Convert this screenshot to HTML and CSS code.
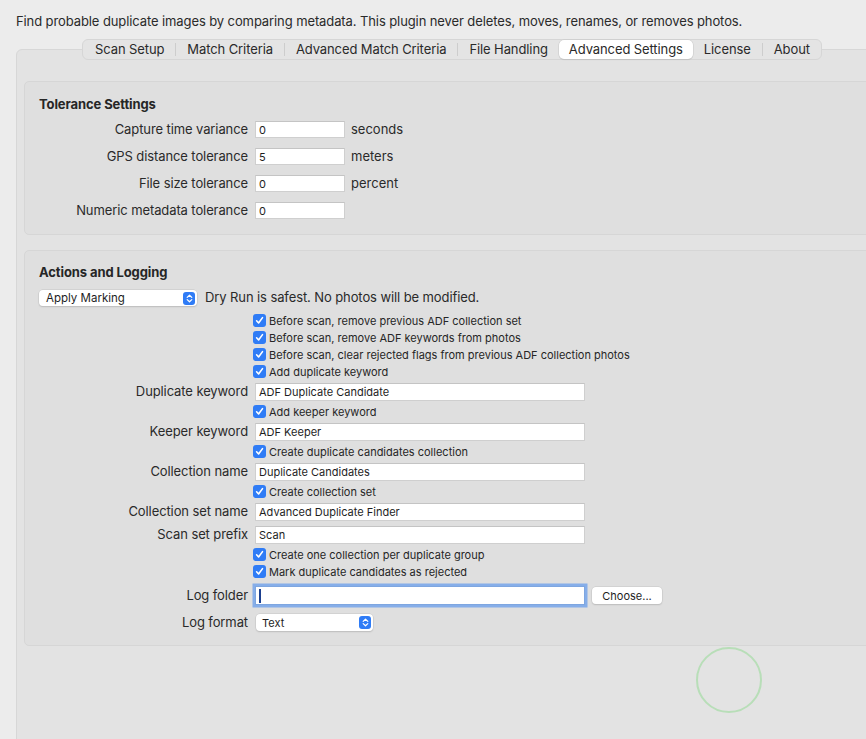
FILE: index.html
```html
<!DOCTYPE html>
<html>
<head>
<meta charset="utf-8">
<link rel="stylesheet" href="styles.css">
</head>
<body>
<p class="intro">Find probable duplicate images by comparing metadata. This plugin never deletes, moves, renames, or removes photos.</p>
<nav class="tabbar">
  <span class="tab">Scan Setup</span><span class="sep"></span>
  <span class="tab">Match Criteria</span><span class="sep"></span>
  <span class="tab">Advanced Match Criteria</span><span class="sep"></span>
  <span class="tab">File Handling</span>
  <span class="tab active">Advanced Settings</span>
  <span class="tab">License</span><span class="sep"></span>
  <span class="tab">About</span>
</nav>
<section class="panel">
  <div class="group g1">
    <h2 class="group-title">Tolerance Settings</h2>
    <div class="trow"><span class="lbl">Capture time variance</span><div class="ctl"><span class="field short">0</span><span class="unit">seconds</span></div></div>
    <div class="trow"><span class="lbl">GPS distance tolerance</span><div class="ctl"><span class="field short">5</span><span class="unit">meters</span></div></div>
    <div class="trow"><span class="lbl">File size tolerance</span><div class="ctl"><span class="field short">0</span><span class="unit">percent</span></div></div>
    <div class="trow"><span class="lbl">Numeric metadata tolerance</span><div class="ctl"><span class="field short">0</span></div></div>
  </div>
  <div class="group g2">
    <h2 class="group-title">Actions and Logging</h2>
    <div class="moderow">
      <span class="popup mode">Apply Marking<span class="stepper"><svg width="7" height="9" viewBox="0 0 7 9"><path d="M1.2 3.4 L3.5 1.2 L5.8 3.4 M1.2 5.6 L3.5 7.8 L5.8 5.6" fill="none" stroke="#fff" stroke-width="1.2" stroke-linecap="round" stroke-linejoin="round"/></svg></span></span>
      <span class="note">Dry Run is safest. No photos will be modified.</span>
    </div>
    <div class="crow"><span class="lbl"></span><label class="check"><span class="box"><svg width="9" height="9" viewBox="0 0 9 9"><path d="M1.6 4.8 L3.6 7 L7.5 1.6" fill="none" stroke="#fff" stroke-width="1.6" stroke-linecap="round" stroke-linejoin="round"/></svg></span>Before scan, remove previous ADF collection set</label></div>
    <div class="crow"><span class="lbl"></span><label class="check"><span class="box"><svg width="9" height="9" viewBox="0 0 9 9"><path d="M1.6 4.8 L3.6 7 L7.5 1.6" fill="none" stroke="#fff" stroke-width="1.6" stroke-linecap="round" stroke-linejoin="round"/></svg></span>Before scan, remove ADF keywords from photos</label></div>
    <div class="crow"><span class="lbl"></span><label class="check"><span class="box"><svg width="9" height="9" viewBox="0 0 9 9"><path d="M1.6 4.8 L3.6 7 L7.5 1.6" fill="none" stroke="#fff" stroke-width="1.6" stroke-linecap="round" stroke-linejoin="round"/></svg></span>Before scan, clear rejected flags from previous ADF collection photos</label></div>
    <div class="crow"><span class="lbl"></span><label class="check"><span class="box"><svg width="9" height="9" viewBox="0 0 9 9"><path d="M1.6 4.8 L3.6 7 L7.5 1.6" fill="none" stroke="#fff" stroke-width="1.6" stroke-linecap="round" stroke-linejoin="round"/></svg></span>Add duplicate keyword</label></div>
    <div class="frow"><span class="lbl">Duplicate keyword</span><span class="field long">ADF Duplicate Candidate</span></div>
    <div class="crow"><span class="lbl"></span><label class="check"><span class="box"><svg width="9" height="9" viewBox="0 0 9 9"><path d="M1.6 4.8 L3.6 7 L7.5 1.6" fill="none" stroke="#fff" stroke-width="1.6" stroke-linecap="round" stroke-linejoin="round"/></svg></span>Add keeper keyword</label></div>
    <div class="frow"><span class="lbl">Keeper keyword</span><span class="field long">ADF Keeper</span></div>
    <div class="crow"><span class="lbl"></span><label class="check"><span class="box"><svg width="9" height="9" viewBox="0 0 9 9"><path d="M1.6 4.8 L3.6 7 L7.5 1.6" fill="none" stroke="#fff" stroke-width="1.6" stroke-linecap="round" stroke-linejoin="round"/></svg></span>Create duplicate candidates collection</label></div>
    <div class="frow"><span class="lbl">Collection name</span><span class="field long">Duplicate Candidates</span></div>
    <div class="crow"><span class="lbl"></span><label class="check"><span class="box"><svg width="9" height="9" viewBox="0 0 9 9"><path d="M1.6 4.8 L3.6 7 L7.5 1.6" fill="none" stroke="#fff" stroke-width="1.6" stroke-linecap="round" stroke-linejoin="round"/></svg></span>Create collection set</label></div>
    <div class="frow"><span class="lbl">Collection set name</span><span class="field long">Advanced Duplicate Finder</span></div>
    <div class="frow"><span class="lbl">Scan set prefix</span><span class="field long">Scan</span></div>
    <div class="crow"><span class="lbl"></span><label class="check"><span class="box"><svg width="9" height="9" viewBox="0 0 9 9"><path d="M1.6 4.8 L3.6 7 L7.5 1.6" fill="none" stroke="#fff" stroke-width="1.6" stroke-linecap="round" stroke-linejoin="round"/></svg></span>Create one collection per duplicate group</label></div>
    <div class="crow"><span class="lbl"></span><label class="check"><span class="box"><svg width="9" height="9" viewBox="0 0 9 9"><path d="M1.6 4.8 L3.6 7 L7.5 1.6" fill="none" stroke="#fff" stroke-width="1.6" stroke-linecap="round" stroke-linejoin="round"/></svg></span>Mark duplicate candidates as rejected</label></div>
    <div class="frow logrow"><span class="lbl">Log folder</span><span class="field long focus"><span class="caret"></span></span><span class="button">Choose...</span></div>
    <div class="frow fmtrow"><span class="lbl">Log format</span><span class="popup fmt">Text<span class="stepper"><svg width="7" height="9" viewBox="0 0 7 9"><path d="M1.2 3.4 L3.5 1.2 L5.8 3.4 M1.2 5.6 L3.5 7.8 L5.8 5.6" fill="none" stroke="#fff" stroke-width="1.2" stroke-linecap="round" stroke-linejoin="round"/></svg></span></span></div>
  </div>
</section>
<div class="spinner"></div>
</body>
</html>
```

FILE: styles.css
```css
html, body {
  margin: 0;
  padding: 0;
}
body {
  background: #ececec;
  font-family: Inter, "Noto Sans", sans-serif;
  color: #262626;
  overflow: hidden;
  height: 739px;
  position: relative;
}
.intro {
  margin: 0;
  padding: 13px 0 0 16px;
  font-size: 13px;
  line-height: 16px;
  color: #2a2a2a;
  letter-spacing: -0.1px;
}
.tabbar {
  position: relative;
  z-index: 2;
  display: inline-flex;
  align-items: center;
  margin: 10px 0 0 82px;
  height: 19px;
  padding: 0;
  border: 1px solid #d6d6d6;
  border-radius: 6px;
  background: #e4e4e4;
}
.tab {
  font-size: 13px;
  line-height: 19px;
  padding: 0 11px;
  color: #2a2a2a;
  letter-spacing: -0.1px;
}
.tab:first-child {
  padding-left: 12px;
}
.tab.active {
  background: #fff;
  border-radius: 5px;
  box-shadow: 0 0 0 0.5px #c9c9c9, 0 1px 1px rgba(0,0,0,0.12);
  padding: 0 10px;
  height: 19px;
}
.sep {
  width: 1px;
  height: 13px;
  background: #cdcdcd;
}
.panel {
  margin: -11px 0 0 16px;
  width: 900px;
  height: 700px;
  box-sizing: border-box;
  background: #e3e3e3;
  border: 1px solid #d7d7d7;
  border-radius: 6px 0 0 0;
  padding: 31px 0 0 7px;
}
.group {
  background: #dfdfdf;
  border: 1px solid #d6d6d6;
  border-radius: 5px;
  box-sizing: border-box;
}
.g1 {
  height: 154px;
  padding: 14px 0 0 14px;
}
.g2 {
  margin-top: 15px;
  height: 396px;
  padding: 13px 0 0 14px;
}
.group-title {
  margin: 0;
  font-size: 13px;
  line-height: 16px;
  font-weight: 700;
  color: #262626;
  letter-spacing: -0.1px;
}
.g1 .group-title { margin-bottom: 4px; }
.g2 .group-title { margin-bottom: 10px; }
.lbl {
  width: 209px;
  flex: none;
  text-align: right;
  font-size: 13px;
  color: #2a2a2a;
  letter-spacing: -0.1px;
  padding-right: 7px;
  box-sizing: content-box;
  margin-top: -2px;
}
.trow {
  display: flex;
  align-items: center;
  height: 27px;
}
.ctl {
  display: flex;
  align-items: center;
}
.field {
  display: flex;
  align-items: center;
  background: #fff;
  border: 1px solid #cfcfcf;
  border-top-color: #c4c4c4;
  box-sizing: border-box;
  font-size: 11px;
  padding: 0 3px;
  color: #1e1e1e;
  position: relative;
}
.field.short {
  width: 90px;
  height: 17px;
}
.field.long {
  width: 330px;
  height: 18px;
}
.unit {
  margin-left: 6px;
  font-size: 13px;
  color: #2a2a2a;
  margin-top: -2px;
}
.moderow {
  display: flex;
  align-items: center;
  height: 16px;
  margin-bottom: 6px;
}
.popup {
  display: flex;
  align-items: center;
  justify-content: space-between;
  box-sizing: border-box;
  background: #fff;
  border-radius: 4px;
  box-shadow: 0 0 0 0.5px #c5c5c5, 0 1px 1.5px rgba(0,0,0,0.18);
  font-size: 11px;
  color: #1e1e1e;
}
.popup.mode {
  width: 158px;
  height: 16px;
  padding: 0 2px 0 7px;
  font-size: 11.5px;
}
.popup.fmt {
  width: 117px;
  height: 17px;
  padding: 0 2px 0 6px;
  margin-left: 1px;
}
.stepper {
  width: 12px;
  height: 13px;
  background: #2f7cf6;
  border-radius: 3px;
  display: flex;
  align-items: center;
  justify-content: center;
}
.note {
  margin-left: 8px;
  font-size: 13px;
  color: #2a2a2a;
  letter-spacing: -0.1px;
  margin-top: -3px;
}
.crow {
  display: flex;
  align-items: center;
  height: 17px;
}
.check {
  display: flex;
  align-items: center;
  margin-left: -2px;
  font-size: 11px;
  color: #262626;
}
.box {
  width: 13px;
  height: 13px;
  border-radius: 3px;
  background: #2f7cf6;
  display: flex;
  align-items: center;
  justify-content: center;
  margin-right: 3px;
}
.frow {
  display: flex;
  align-items: center;
  height: 23px;
}
.logrow {
  margin-top: 4px;
}
.fmtrow {
  margin-top: 4px;
}
.field.focus {
  height: 19px;
  border-color: #7ea6e0;
  box-shadow: 0 0 0 2.5px #86aee9;
}
.caret {
  width: 1.5px;
  height: 14px;
  background: #1b3f8f;
}
.button {
  margin-left: 7px;
  width: 70px;
  height: 17px;
  background: #fff;
  border-radius: 4px;
  box-shadow: 0 0 0 0.5px #c5c5c5, 0 1px 1.5px rgba(0,0,0,0.18);
  font-size: 11px;
  color: #1e1e1e;
  display: flex;
  align-items: center;
  justify-content: center;
}
.spinner {
  position: absolute;
  left: 696px;
  top: 647px;
  width: 62px;
  height: 62px;
  border: 2px solid #b8deb8;
  border-radius: 50%;
}
```
